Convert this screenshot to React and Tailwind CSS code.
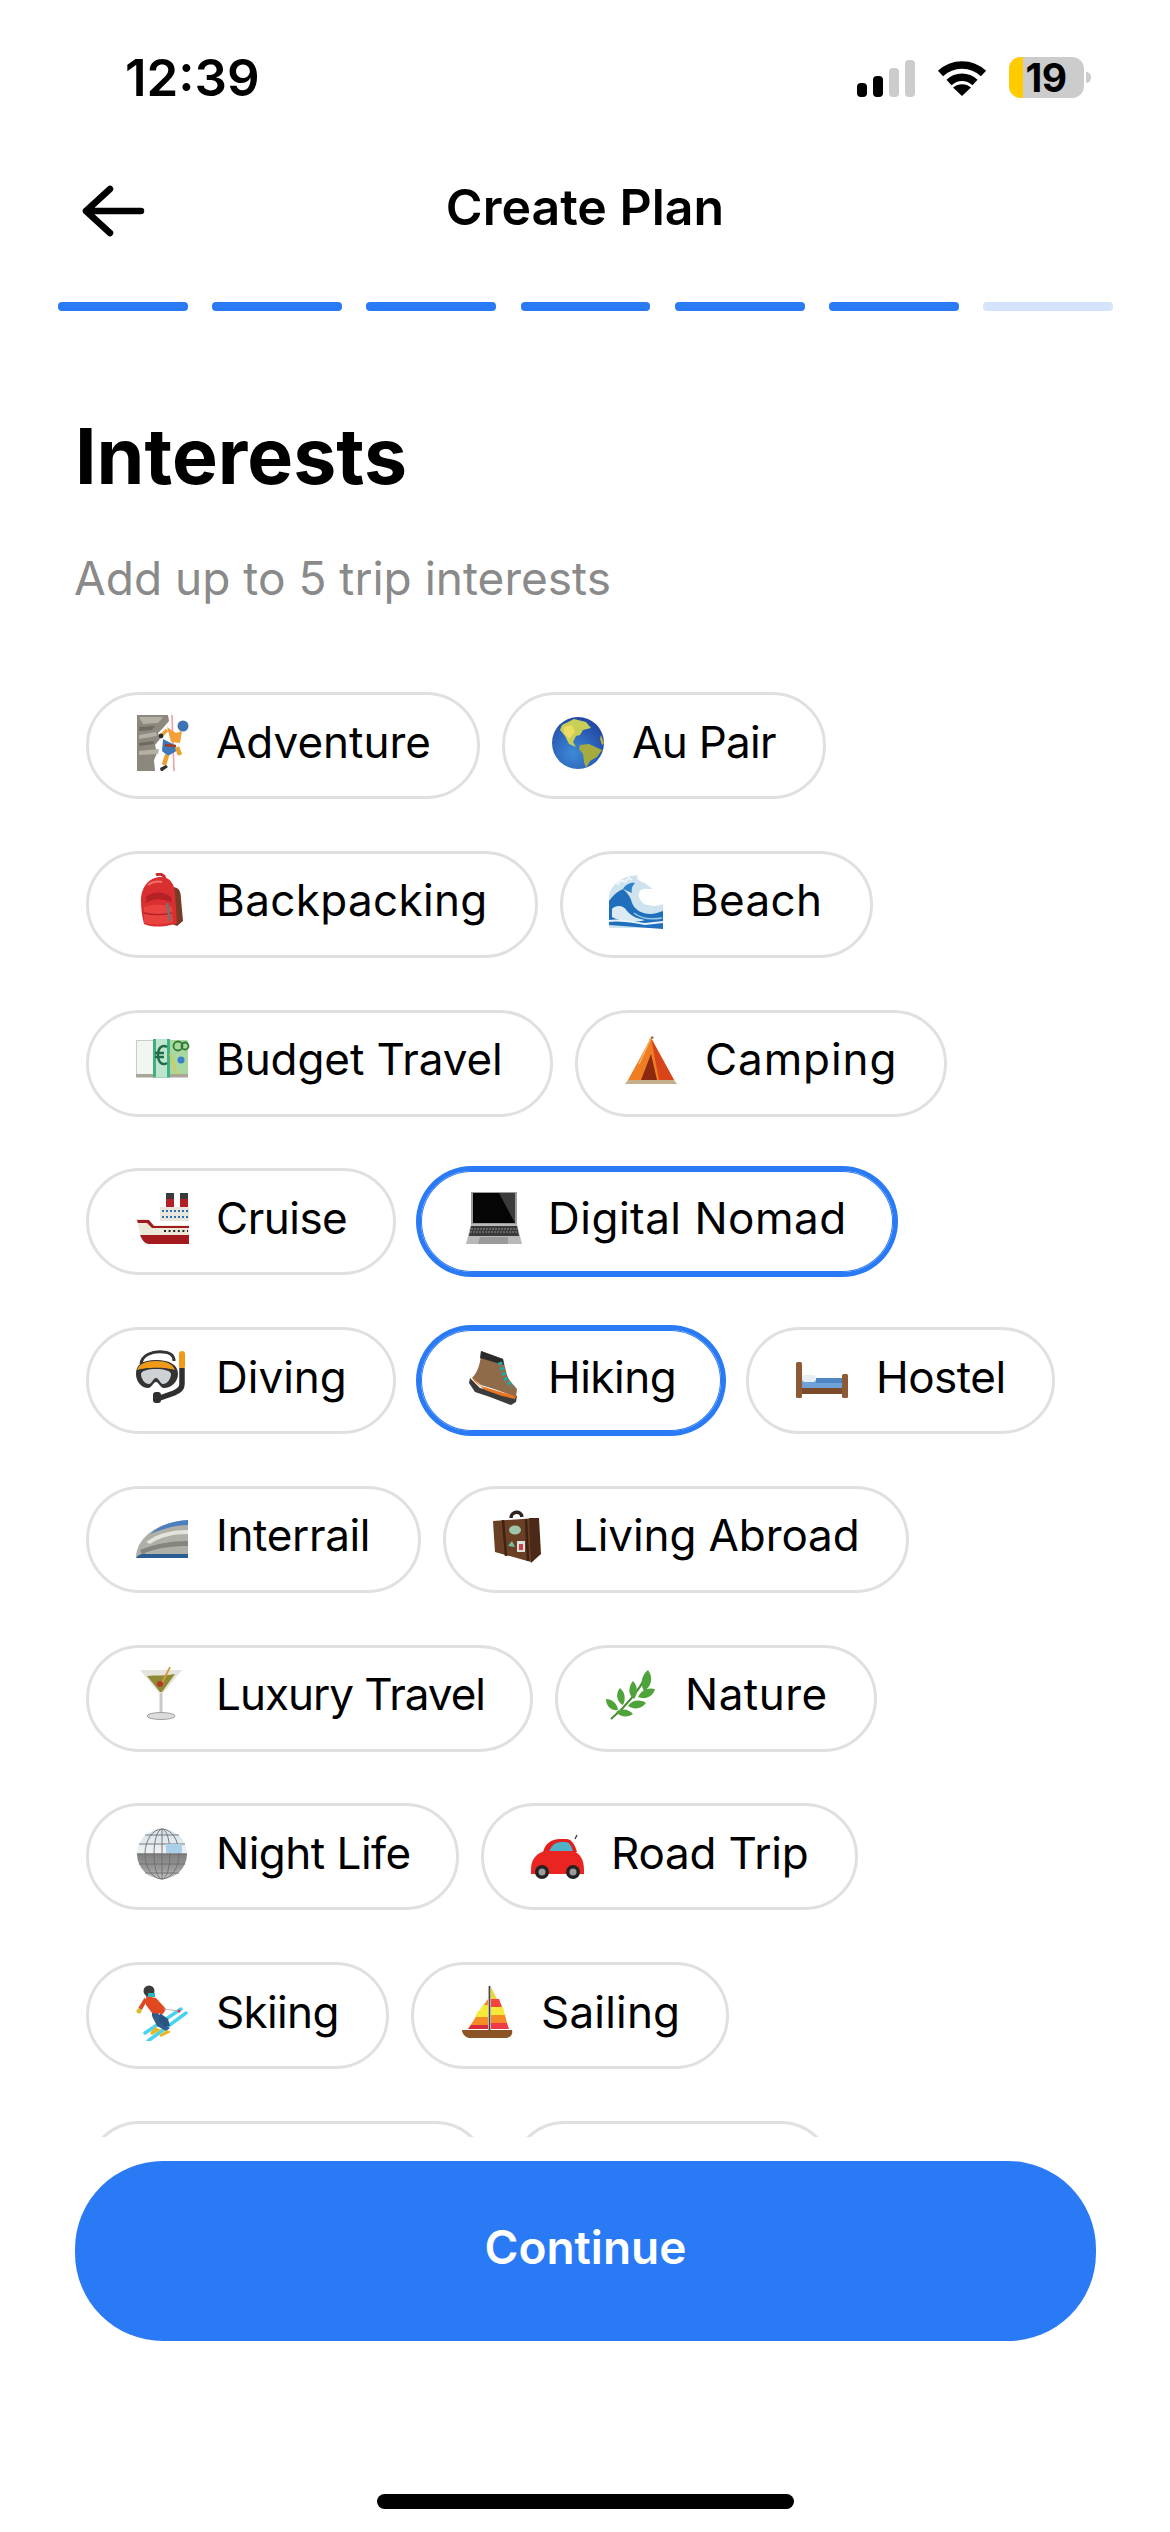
import React from "react";

const Climber = () => (
  <svg viewBox="0 0 56 56" className="w-14 h-14">
    <path d="M3 0h31l1 6-6 7-5 5 2 6-5 6 2 8-3 7 1 11H3z" fill="#8d887d" />
    <path d="M5 2h24l-5 6-15 1zM5 20l17-3 1 4-18 3zM5 36l20-2-1 5-19 1z" fill="#b5b0a4" />
    <path d="M5 12l16-1-3 4-13 1zM5 28l15-2v3l-15 2z" fill="#6f6a60" />
    <path d="M38 0l2 56" stroke="#f0a0a8" strokeWidth="1.6" />
    <circle cx="49" cy="11" r="5.500" fill="#3d72b4" />
    <path d="M33 12l9 6 6-2-2 12-9-1z" fill="#f2a13a" />
    <path d="M33 15l-7 7" stroke="#f2a13a" strokeWidth="3.500" />
    <path d="M29 24l10 5 5 6-10 6-6-5z" fill="#3f77b8" />
    <path d="M31 30l11 1" stroke="#a33a1f" strokeWidth="2.500" />
    <path d="M33 40l-3 10M43 32l3 8" stroke="#eda02f" strokeWidth="4.500" />
    <path d="M26 53l6-3 2 2-7 5z" fill="#33302c" />
    <circle cx="27" cy="21" r="2.400" fill="#2b2b2b" />
  </svg>
);

const Globe = () => (
  <svg viewBox="0 0 56 56" className="w-14 h-14">
    <defs>
      <radialGradient id="g1" cx="0.4" cy="0.7" r="0.8">
        <stop offset="0" stopColor="#3d8ad8" />
        <stop offset="1" stopColor="#1e3f9e" />
      </radialGradient>
    </defs>
    <circle cx="28" cy="28" r="26" fill="url(#g1)" />
    <path d="M12 10l12-6 12 3 5 6-8 2-3 5-4 1-3 6 3 5-7-3-4-8-5-6z" fill="#c8cf56" />
    <path d="M14 12l8-2 3 7-6 7-5-6z" fill="#ecdc62" />
    <path d="M30 30l9-1 13 6-5 7-7 4-4 7-2-6-1-8-4-5z" fill="#a6ab3f" />
    <path d="M51 20l3 8-2 2-2-6z" fill="#b8b640" />
  </svg>
);

const Backpack = () => (
  <svg viewBox="0 0 56 56" className="w-14 h-14">
    <path d="M38 14c7 0 9 4 9 12l2 22-6 5-5-2z" fill="#7a3b26" />
    <path d="M22 2c4-2 8 0 9 3" stroke="#c92a2a" strokeWidth="3" fill="none" />
    <path d="M7 28c0-14 8-24 20-24 9 0 14 7 14 18l2 28c-8 4-24 5-33 1-2-8-3-15-3-23z" fill="#d92f30" />
    <path d="M12 24c6-6 18-6 25 0l1 6c-8-5-18-5-26 0z" fill="#b52225" />
    <path d="M10 34c6-3 22-3 28 0l1 15c-8 3-22 3-29 1z" fill="#e8433f" />
    <path d="M10 40c8 2 20 2 28 0" stroke="#b52225" strokeWidth="1.500" fill="none" />
    <path d="M33 30l3 18" stroke="#6e7477" strokeWidth="2.500" />
    <path d="M14 12c4-3 10-4 14-3" stroke="#f0716a" strokeWidth="2" fill="none" />
  </svg>
);

const Wave = () => (
  <svg viewBox="0 0 56 56" className="w-14 h-14">
    <path d="M1 50V22C4 10 15 3 30 2c-2 3 0 5 4 7 4 1 8 5 11 7-5 0-9-1-12 1-4 3-3 9 3 14 6 2 13 3 19 0v24H1z" fill="#cfe3ee" />
    <path d="M1 52V28c4-6 9-10 14-12 5 4 8 9 9 14 3 7 10 11 18 11 5 0 9-2 13-3v18z" fill="#1f6fbd" />
    <path d="M4 36c5-5 12-3 15 2 5 6 12 8 18 9-9 3-25 2-33-3z" fill="#dcebf3" />
    <path d="M15 16c2-4 8-7 12-6-3 3-4 6-3 10z" fill="#2c83cc" />
    <path d="M6 8l4 3 3-4 4 2 4-4 3 2" stroke="#f5fafc" strokeWidth="1.500" fill="none" />
    <path d="M1 48c12-2 22 1 36 3l18-2" stroke="#e8f3f7" strokeWidth="1.800" fill="none" />
    <path d="M26 40c6 5 16 7 28 5" stroke="#9cc8e4" strokeWidth="1.500" fill="none" />
  </svg>
);

const Euro = () => (
  <svg viewBox="0 0 56 56" className="w-14 h-14">
    <rect x="2" y="8" width="52" height="36" rx="1.500" fill="#a8d8a0" />
    <rect x="2.500" y="8.500" width="18" height="34" fill="#f1f6f1" stroke="#c4cfc4" strokeWidth="1" />
    <rect x="2" y="42" width="52" height="3.500" fill="#a8a596" />
    <rect x="19" y="7" width="17" height="38.500" fill="#3fb083" />
    <rect x="22" y="7" width="11" height="38.500" fill="#bfe5cd" />
    <path d="M33 15c-5-3-9 1-9 8s4 11 9 8M21 21h9M21 25h9" stroke="#1f6b4a" strokeWidth="2.400" fill="none" />
    <circle cx="47" cy="28" r="3.500" fill="#3f7ecb" />
    <circle cx="44" cy="14" r="4.500" fill="none" stroke="#2e7d32" strokeWidth="1.800" />
    <circle cx="51" cy="14" r="3.500" fill="none" stroke="#2e7d32" strokeWidth="1.800" />
    <path d="M36 22l4 12 3 8" stroke="#d9c850" strokeWidth="2" fill="none" />
  </svg>
);

const Tent = () => (
  <svg viewBox="0 0 56 56" className="w-14 h-14">
    <path d="M28 6L5 48h46z" fill="#ef7e22" />
    <path d="M28 6l23 42H36z" fill="#d9451a" />
    <path d="M26 8l3-4 2 2z" fill="#8b5a2b" />
    <path d="M28 22l-10 26h16z" fill="#8b2a10" />
    <path d="M5 48h46l3 4H2z" fill="#c4b08a" />
    <path d="M28 6L16 32" stroke="#f7b267" strokeWidth="1.500" />
  </svg>
);

const Ship = () => (
  <svg viewBox="0 0 56 56" className="w-14 h-14">
    <rect x="32" y="2" width="8" height="6" fill="#3a3a3a" />
    <rect x="32" y="8" width="8" height="8" fill="#b02025" />
    <rect x="46" y="2" width="8" height="6" fill="#3a3a3a" />
    <rect x="46" y="8" width="8" height="8" fill="#b02025" />
    <rect x="26" y="16" width="29" height="14" fill="#e8e6dc" />
    <path d="M28 20h27M28 26h27" stroke="#2c6fb0" strokeWidth="2" strokeDasharray="2 2" />
    <path d="M2 28h12l4 6h37v14H8z" fill="#ece9d9" />
    <path d="M3 29l12 0 5 6h35v2H18l-5-5H4z" fill="#a11a1e" />
    <path d="M30 40h24" stroke="#222" strokeWidth="2" strokeDasharray="2 2.600" />
    <path d="M6 44h49v9H15c-4 0-7-4-9-9z" fill="#a41a1f" />
  </svg>
);

const Laptop = () => (
  <svg viewBox="0 0 56 56" className="w-14 h-14">
    <path d="M5 1h46v32H5z" fill="#9c9c9c" />
    <path d="M7 2h42v30H7z" fill="#050505" />
    <path d="M33 2h16v30z" fill="#3b3b3b" />
    <path d="M5 33h46l5 20H0z" fill="#b9b9b9" />
    <path d="M5 35h46l2 10H3z" fill="#3a3a3a" />
    <path d="M5 38h46M4 41h48" stroke="#8d8d8d" strokeWidth="1" strokeDasharray="2 1" />
    <path d="M14 46h28v7H12z" fill="#9a9a9a" />
  </svg>
);

const Mask = () => (
  <svg viewBox="0 0 56 56" className="w-14 h-14">
    <path d="M7 14C8 5 18 1 29 2c6 0 11 3 11 9" fill="none" stroke="#333" strokeWidth="3" />
    <path d="M2 24C2 15 8 10 22 10s22 5 22 14c0 8-7 14-14 14-4 0-5-6-8-6s-4 6-8 6C8 38 2 32 2 24z" fill="#333" />
    <path d="M3 20c2-6 9-9 19-9s17 3 19 9c-9-3-29-3-38 0z" fill="#f09a1a" />
    <path d="M7 24c0-3 7-5 15-5s15 2 15 5c0 5-4 10-8 10-3 0-4-6-7-6s-4 6-7 6c-4 0-8-5-8-10z" fill="#cfd2d4" />
    <rect x="45" y="1" width="6" height="18" rx="3" fill="#f09a1a" />
    <path d="M48 18v16c0 4-3 7-8 9l-17 6" fill="none" stroke="#2f2f2f" strokeWidth="5.500" />
    <rect x="19" y="42" width="8" height="11" rx="3" fill="#2f2f2f" />
  </svg>
);

const Boot = () => (
  <svg viewBox="0 0 56 56" className="w-14 h-14">
    <path d="M15 1l22 8 4 16c2 6 6 9 10 14l-1 8-22-8-13-4L6 28c5-5 9-14 9-27z" fill="#8f6b4a" />
    <path d="M15 1l22 8 1 6-24-7z" fill="#2b2b2b" />
    <path d="M34 12l5 16 7 9" stroke="#1eaaa6" strokeWidth="4" strokeDasharray="3 2.500" fill="none" />
    <path d="M4 28l10 10 24 6 13 2-1 6-5 3-8-3-13-5-15-5-6-9z" fill="#3b3b3b" />
    <path d="M6 27l9 9 23 7 12 3-1 3-13-3-17-6-11-9z" fill="#e8741f" />
  </svg>
);

const Bed = () => (
  <svg viewBox="0 0 56 56" className="w-14 h-14">
    <rect x="2" y="12" width="6" height="36" rx="1.500" fill="#8d5a36" />
    <rect x="48" y="24" width="6" height="24" rx="1.500" fill="#8d5a36" />
    <rect x="8" y="30" width="40" height="10" fill="#6ea2d8" />
    <rect x="8" y="25" width="14" height="7" rx="3" fill="#e8eef5" />
    <path d="M22 28h26v5H22z" fill="#4f86c6" />
    <rect x="8" y="38" width="40" height="6" fill="#7b4b2c" />
  </svg>
);

const Train = () => (
  <svg viewBox="0 0 56 56" className="w-14 h-14">
    <path d="M54 12v38H2c0-8 3-14 8-20 10-11 26-17 44-18z" fill="#aeb0a8" />
    <path d="M54 12c-18 1-30 7-38 14 10-4 24-9 38-9z" fill="#4a7fc0" />
    <path d="M12 34c12-9 26-12 42-12v4c-15 0-28 3-38 10z" fill="#e4e4dc" />
    <path d="M6 42c14-6 32-9 48-9v5c-16 0-32 2-46 8z" fill="#84857f" />
    <path d="M2 50c2-3 6-5 10-4h42v4z" fill="#2a5e92" />
  </svg>
);

const Suitcase = () => (
  <svg viewBox="0 0 56 56" className="w-14 h-14">
    <path d="M20 10c0-7 10-8 11-1" fill="none" stroke="#2e2320" strokeWidth="3.500" />
    <path d="M2 13l44-3 2 34-8 10L4 44z" fill="#6a3f24" />
    <path d="M38 10l10 0 2 36-10 9z" fill="#4a2a17" />
    <path d="M12 12l3 36M35 11l2 42" stroke="#3c2314" strokeWidth="2.500" />
    <ellipse cx="24" cy="22" rx="6" ry="4.500" fill="#9fc6a8" />
    <rect x="26" y="33" width="8" height="11" fill="#d8e3e0" />
    <rect x="28" y="36" width="4" height="6" fill="#c9444a" />
    <path d="M17 38l4-5 3 6z" fill="#6fc2a2" />
  </svg>
);

const Martini = () => (
  <svg viewBox="0 0 56 56" className="w-14 h-14">
    <path d="M6 3h42L29 26h-4z" fill="#e4e4dc" />
    <path d="M13 9c9-1 19 0 28-2L28 25h-2z" fill="#8f8a35" />
    <path d="M36 0l-9 18" stroke="#d99a38" strokeWidth="1.800" />
    <circle cx="26" cy="17" r="3" fill="#b63a22" />
    <path d="M27 26v21" stroke="#c9c9c9" strokeWidth="3" />
    <ellipse cx="27" cy="49" rx="14" ry="3.500" fill="#dcdcdc" stroke="#8c8c8c" strokeWidth="0.800" />
  </svg>
);

const Herb = () => (
  <svg viewBox="0 0 56 56" className="w-14 h-14">
    <path d="M8 52C20 42 32 30 44 8" stroke="#3f8a2e" strokeWidth="2" fill="none" />
    <path d="M45 3c6 8 3 17-4 21-4-7-3-15 4-21zM30 14c5 5 5 13 1 18-6-4-6-12-1-18zM52 22c-2 8-10 11-17 8 3-7 10-10 17-8zM17 21c5 4 6 11 3 17-6-3-8-11-3-17zM43 36c-4 6-12 7-18 3 4-6 12-7 18-3zM3 32c6 0 11 4 12 11-7 1-12-4-12-11zM30 47c-5 4-13 3-17-2 5-4 13-3 17 2z" fill="#4ea33a" />
  </svg>
);

const Disco = () => (
  <svg viewBox="0 0 56 56" className="w-14 h-14">
    <defs>
      <linearGradient id="g2" x1="0" y1="0" x2="0" y2="1">
        <stop offset="0" stopColor="#d4e2ec" />
        <stop offset="0.48" stopColor="#eef1f3" />
        <stop offset="0.5" stopColor="#7f7f7f" />
        <stop offset="0.8" stopColor="#9a9a9a" />
        <stop offset="1" stopColor="#c8c8c8" />
      </linearGradient>
    </defs>
    <circle cx="28" cy="28" r="25" fill="url(#g2)" />
    <g stroke="#6d6d6d" strokeWidth="0.900" fill="none">
      <path d="M5 18h46M3 28h50M5 38h46M11 9h34M11 47h34" />
      <ellipse cx="28" cy="28" rx="8" ry="25" />
      <ellipse cx="28" cy="28" rx="17" ry="25" />
      <path d="M28 3v50" />
    </g>
    <path d="M32 18h16v9H32z" fill="#a9d0e8" />
  </svg>
);

const Car = () => (
  <svg viewBox="0 0 56 56" className="w-14 h-14">
    <path d="M14 26c2-8 8-13 17-13h6c6 0 9 6 11 13z" fill="#e3201b" />
    <path d="M20 26c2-6 6-10 12-10h4c5 0 7 5 8 10z" fill="#4fb0c6" />
    <path d="M2 44c0-10 4-16 14-19h28c7 2 11 9 11 19v4H2z" fill="#ea2420" />
    <circle cx="13" cy="46" r="7" fill="#222" />
    <circle cx="13" cy="46" r="3.500" fill="#9b9b9b" />
    <circle cx="44" cy="46" r="7" fill="#222" />
    <circle cx="44" cy="46" r="3.500" fill="#9b9b9b" />
    <path d="M46 13l2-4" stroke="#333" strokeWidth="1.200" />
  </svg>
);

const Skier = () => (
  <svg viewBox="0 0 56 56" className="w-14 h-14">
    <path d="M7 52l38-28M4 44l36-24" stroke="#4ad3f0" strokeWidth="3.500" strokeLinecap="round" transform="translate(7 4)" />
    <path d="M18 23l10 9 2 8 6 3-4 3-9-5-5-10z" fill="#2f5d8c" />
    <path d="M26 28l8 6 2 7-5 1-6-6z" fill="#2a5480" />
    <path d="M12 11l10 2 10 11-3 5-11-1-6-8z" fill="#e0491f" />
    <path d="M12 14L6 24" stroke="#e0491f" strokeWidth="4" />
    <circle cx="5" cy="26" r="2.500" fill="#d8bd28" />
    <circle cx="15" cy="6" r="5.500" fill="#3b3b3b" />
    <path d="M14 8h7v4h-7z" fill="#2bb3c4" />
    <path d="M21 42l6 3-9 5-2-2zM33 45l4 2-10 5-2-2z" fill="#e6b81f" />
    <path d="M30 24l14 2" stroke="#bbb" strokeWidth="1" />
    <circle cx="45" cy="26" r="1.600" fill="#e34" />
  </svg>
);

const Sail = () => (
  <svg viewBox="0 0 56 56" className="w-14 h-14">
    <path d="M32 2l7 14H32z" fill="#f2d532" />
    <path d="M32 14h8l3 8H32z" fill="#f4443d" />
    <path d="M32 22h12l2 8H32z" fill="#f5ea3a" />
    <path d="M32 30h14l2 8H32z" fill="#f48b27" />
    <path d="M32 38h16l2 6H32z" fill="#ef3a48" />
    <path d="M29 14v30H9l4-6 5-8 4-6 4-6z" fill="#f48b27" />
    <path d="M29 20v6h-9l4-6zM29 26v6h-13l3-6z" fill="#f5ea3a" />
    <path d="M29 40v4H9l3-4z" fill="#d92b3a" />
    <path d="M30.500 1v46" stroke="#444" strokeWidth="1.800" />
    <path d="M3 45h50c1 4-1 7-5 8H10c-4-1-7-4-7-8z" fill="#8b5424" />
  </svg>
);

const chips = [
  { name: "Adventure", w: "w-[394px]", Icon: Climber, t: "tracking-[0px]" },
  { name: "Au Pair", w: "w-[324px]", Icon: Globe, t: "tracking-[-0.7px]" },
  { name: "Backpacking", w: "w-[452px]", Icon: Backpack, t: "tracking-[0.35px]" },
  { name: "Beach", w: "w-[313px]", Icon: Wave, t: "tracking-[0.3px]" },
  { name: "Budget Travel", w: "w-[467px]", Icon: Euro, t: "tracking-[-0.1px]" },
  { name: "Camping", w: "w-[372px]", Icon: Tent, t: "tracking-[0.9px]" },
  { name: "Cruise", w: "w-[310px]", Icon: Ship, t: "tracking-[-0.5px]" },
  { name: "Digital Nomad", w: "w-[478px]", Icon: Laptop, on: true, t: "tracking-[0.5px]" },
  { name: "Diving", w: "w-[310px]", Icon: Mask, t: "tracking-[0px]" },
  { name: "Hiking", w: "w-[306px]", Icon: Boot, on: true, t: "tracking-[-0.5px]" },
  { name: "Hostel", w: "w-[309px]", Icon: Bed, t: "tracking-[-0.5px]" },
  { name: "Interrail", w: "w-[335px]", Icon: Train, t: "tracking-[-0.35px]" },
  { name: "Living Abroad", w: "w-[466px]", Icon: Suitcase, t: "tracking-[-0.1px]" },
  { name: "Luxury Travel", w: "w-[447px]", Icon: Martini, t: "tracking-[-1px]" },
  { name: "Nature", w: "w-[322px]", Icon: Herb, t: "tracking-[0.5px]" },
  { name: "Night Life", w: "w-[373px]", Icon: Disco, t: "tracking-[-0.5px]" },
  { name: "Road Trip", w: "w-[377px]", Icon: Car, t: "tracking-[-0.2px]" },
  { name: "Skiing", w: "w-[303px]", Icon: Skier, t: "tracking-[-0.65px]" },
  { name: "Sailing", w: "w-[318px]", Icon: Sail, t: "tracking-[0.2px]" },
];

function Chip({ name, w, Icon, on, t }) {
  return (
    <div
      className={`${w} h-[107px] rounded-full border-[3px] flex items-center pl-[45px] pb-[6px] bg-white ${
        on
          ? "border-[#2a7af5] shadow-[0_0_0_2px_#2a7af5,inset_0_0_0_1px_#2a7af5]"
          : "border-[#e0e0e0]"
      }`}
    >
      <Icon />
      <span className={`ml-[26px] mb-[2px] text-[44px] leading-[56px] text-black whitespace-nowrap ${t}`}>{name}</span>
    </div>
  );
}

export default function App() {
  return (
    <div className="w-[1170px] h-[2532px] bg-white flex flex-col overflow-hidden font-['Inter',sans-serif]">
      {/* status bar */}
      <div className="h-[150px] flex justify-between items-start pl-[125px] pr-[79px] pt-[48px]">
        <span className="text-[51px] leading-[60px] font-semibold text-black">12:39</span>
        <div className="flex items-center gap-[22px] pt-[9px]">
          <div className="flex items-end gap-[6px] h-[37px] mt-[2px]">
            <div className="w-[10px] h-[14px] rounded-[4px] bg-black" />
            <div className="w-[10px] h-[21px] rounded-[4px] bg-black" />
            <div className="w-[10px] h-[29px] rounded-[4px] bg-[#cccccc]" />
            <div className="w-[10px] h-[37px] rounded-[4px] bg-[#cccccc]" />
          </div>
          <svg viewBox="0 0 50 37" className="w-[50px] h-[37px]">
            <path d="M3.500 14.500C15.500 3 34.500 3 46.500 14.500" fill="none" stroke="#000" strokeWidth="7.500" />
            <path d="M12 23.500c7.500-7 18.500-7 26 0" fill="none" stroke="#000" strokeWidth="7.500" />
            <path d="M25 37L16 28.500c5-4.500 13-4.500 18 0z" fill="#000" />
          </svg>
          <div className="flex items-center gap-[2px]">
            <div className="w-[75px] h-[41px] rounded-[12px] bg-[#cccccc] flex">
              <div className="w-[14px] h-full rounded-l-[12px] bg-[#ffcc00]" />
              <span className="ml-[1px] w-[44px] text-center text-[39px] leading-[41px] font-bold text-black tracking-[-0.5px]">19</span>
            </div>
            <div className="w-[5px] h-[11px] rounded-r-full bg-[#cccccc]" />
          </div>
        </div>
      </div>

      {/* nav */}
      <div className="h-[122px] grid grid-cols-[1fr_auto_1fr] items-center">
        <svg viewBox="0 0 70 56" className="w-[70px] h-[56px] ml-[80px]">
          <path d="M61 25H6M30 3L6 25M30 47L6 25" transform="translate(0 3)" fill="none" stroke="#000" strokeWidth="6.500" strokeLinecap="round" strokeLinejoin="round" />
        </svg>
        <span className="text-[50px] leading-[56px] font-semibold text-black pb-[9px]">Create Plan</span>
        <div />
      </div>

      {/* progress */}
      <div className="mt-[30px] pl-[58px] pr-[57px] flex gap-[24.330px]">
        {[0, 1, 2, 3, 4, 5].map((i) => (
          <div key={i} className="flex-1 h-[9px] rounded-[4px] bg-[#2a7af5]" />
        ))}
        <div className="flex-1 h-[9px] rounded-[4px] bg-[#d4e4fc]" />
      </div>

      {/* heading */}
      <h1 className="mt-[99px] pl-[75px] text-[77px] leading-[92px] font-bold text-black">Interests</h1>
      <p className="mt-[49px] pl-[74px] text-[46px] leading-[54px] text-[#8a8a8a]">Add up to 5 trip interests</p>

      {/* chips */}
      <div className="mt-[87px] h-[1445px] overflow-hidden pl-[86px] pr-[60px] flex flex-wrap content-start gap-x-[22px] gap-y-[51.750px]">
        {chips.map((c) => (
          <Chip key={c.name} {...c} />
        ))}
        <div className="w-[403px] h-[107px] rounded-full border-[3px] border-[#e0e0e0]" />
        <div className="w-[323px] h-[107px] rounded-full border-[3px] border-[#e0e0e0]" />
      </div>

      {/* button */}
      <div className="mt-[24px] ml-[75px] mr-[74px] h-[180px] rounded-[88px] bg-[#2a7af5] flex items-center justify-center pb-[8px]">
        <span className="text-[46px] leading-[56px] font-semibold text-white">Continue</span>
      </div>

      {/* home indicator */}
      <div className="mt-[153px] mx-auto w-[417px] h-[15px] rounded-full bg-black" />
    </div>
  );
}
